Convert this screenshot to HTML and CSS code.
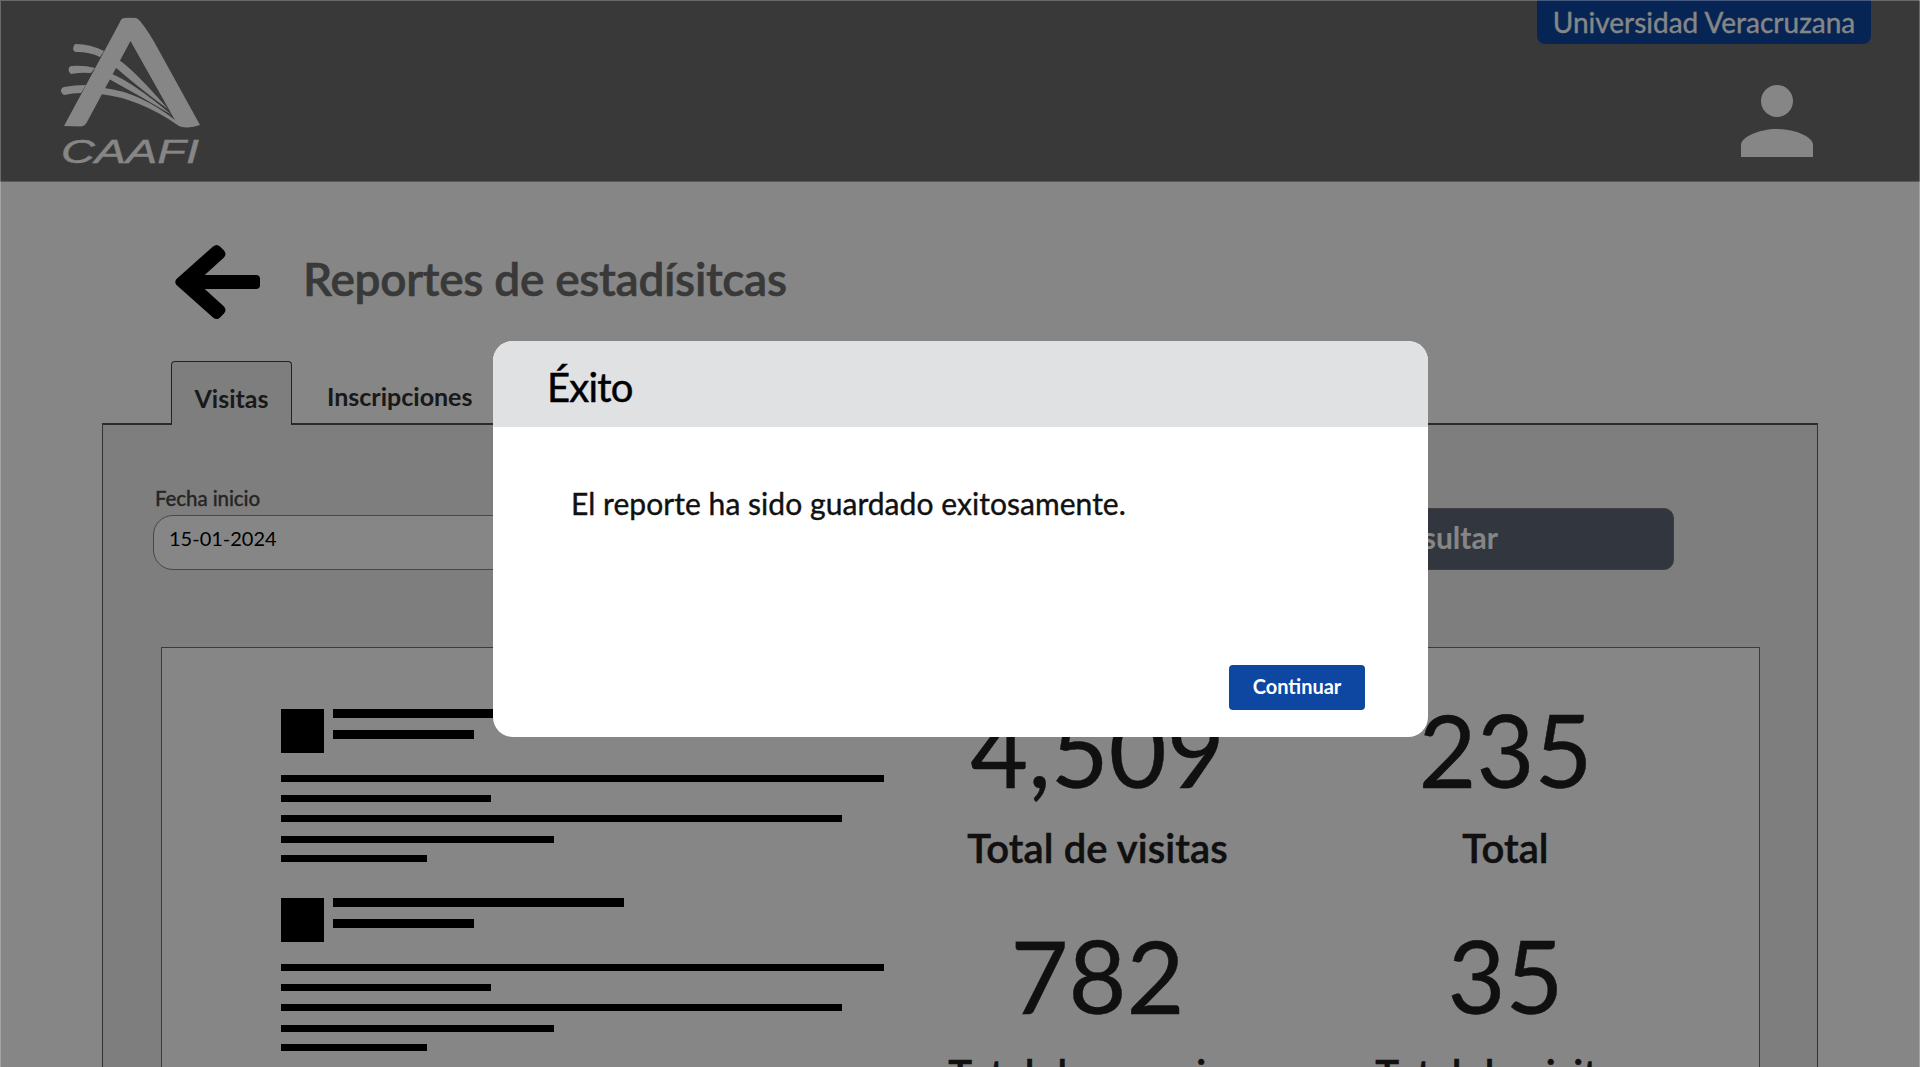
FILE: index.html
```html
<!DOCTYPE html>
<html lang="es">
<head>
<meta charset="utf-8">
<title>Reportes</title>
<link rel="stylesheet" href="styles.css">
</head>
<body>
<div class="page">
  <header class="topbar">
    <div class="logo">
      <svg class="logo-mark" width="142" height="116" viewBox="60 16 142 116" fill="currentColor">
        <path d="M64 126L120 22Q121 18.500 124 18Q130 17.500 136 18Q138 18.500 140 21Q149 32 157 47L200 125Q190 129 180 126.500Q178 126 176 122L130.500 41L87 122Q85 126 81 126.500Q72 126 64 126Z"/>
        <path d="M76 44Q90 44 104 51L100 57Q90 52 76 52Q72 51 73.500 47Q74 44 76 44ZM71 66Q84 65 95 68L91 73Q82 72 71 74Q67 71 69.500 67ZM64 87Q75 85 86 85L81 93Q73 93 64 95Q59 92 62 88Z"/>
        <path d="M119 60Q134 70 168 109Q144 92 115 67ZM112 74Q132 82 172 115Q142 97 109 79ZM104 88Q140 92 177 121.500L179 126Q139 98 100 94Z"/>
      </svg>
      <svg class="logo-name" width="142" height="34"><text x="1" y="26" textLength="138" lengthAdjust="spacingAndGlyphs">CAAFI</text></svg>
    </div>
    <div class="account">
      <div class="badge">Universidad Veracruzana</div>
      <svg class="user" width="72" height="72" viewBox="0 0 72 72" fill="currentColor"><circle cx="36" cy="16" r="16"/><path d="M0 72V60C0 52 18 44 36 44S72 52 72 60V72Z"/></svg>
    </div>
  </header>
  <main class="content">
    <div class="heading">
      <svg width="86" height="76" viewBox="0 0 86 76" fill="#000"><rect x="20" y="31" width="66" height="14" rx="4"/><path d="M2.500 35L39 2.500Q43 -.500 46 2.500L50 6.500Q53 10 50 13.500L23 38L50 62.500Q53 66 50 69.500L46 73.500Q43 76.500 39 73.500L2.500 41Q0 38 2.500 35Z"/></svg>
      <h1>Reportes de estadísitcas</h1>
    </div>
    <nav class="tabs"><span class="tab active">Visitas</span><span class="tab">Inscripciones</span></nav>
    <section class="panel">
      <div class="filters">
        <div class="field"><label>Fecha inicio</label><div class="input">15-01-2024</div></div>
        <div class="query">Consultar</div>
      </div>
      <div class="report">
        <div class="lists">
          <div class="block">
            <div class="head"><i class="square"></i><div class="lines"><i class="w291"></i><i class="w141"></i></div></div>
            <i class="bar b1"></i><i class="bar b2"></i><i class="bar b3"></i><i class="bar b4"></i><i class="bar b5"></i>
          </div>
          <div class="block">
            <div class="head"><i class="square"></i><div class="lines"><i class="w291"></i><i class="w141"></i></div></div>
            <i class="bar b1"></i><i class="bar b2"></i><i class="bar b3"></i><i class="bar b4"></i><i class="bar b5"></i>
          </div>
        </div>
        <div class="stats">
          <div class="stat"><b>4,509</b><span>Total de visitas</span></div>
          <div class="stat"><b>235</b><span>Total</span></div>
          <div class="stat"><b>782</b><span>Total de usuarios</span></div>
          <div class="stat"><b>35</b><span>Total de visitas</span></div>
        </div>
      </div>
    </section>
  </main>
</div>
<div class="overlay">
  <div class="modal" role="dialog">
    <div class="modal-title">Éxito</div>
    <p>El reporte ha sido guardado exitosamente.</p>
    <button>Continuar</button>
  </div>
</div>
</body>
</html>
```
FILE: styles.css
```css
*{box-sizing:border-box}
body{margin:0;font-family:Lato,sans-serif;background:#fff;height:1067px;overflow:hidden}
.page{height:1067px;overflow:hidden}
.topbar{height:182px;background:#6d6d6d;border-bottom:1px solid #aaa;color:#fff;display:flex;justify-content:space-between;padding:0 49px 0 60px}
.logo{padding-top:16px;display:flex;flex-direction:column}
.logo-name{margin-top:5px;overflow:visible}
.logo-name text{font:italic 33px "Liberation Sans",sans-serif;fill:#fff;stroke:#fff;stroke-width:.4px}
.account{display:flex;flex-direction:column;align-items:flex-end;width:334px}
.badge{width:334px;height:44px;background:#0d47a1;border-radius:0 0 8px 8px;font-size:28px;line-height:44px;text-align:center;white-space:nowrap;-webkit-text-stroke:.3px}
.user{margin:41px 58px 0 0}
.content{padding:62px 102px 0}
.heading{display:flex;align-items:center;height:76px;padding-left:72px}
h1{margin:-6px 0 0 43px;font-size:46px;font-weight:600;line-height:60px;letter-spacing:-.3px;color:#6d6d6d;white-space:nowrap;-webkit-text-stroke:.6px}
.tabs{display:flex;height:62px;margin-top:41px;padding-left:69px;position:relative;z-index:1}
.tab{height:62px;padding:5px 36px 0 35px;font-size:25px;line-height:60px;font-weight:700;color:#303030}
.tab.active{width:121px;height:64px;padding:6px 0 0;text-align:center;border:1px solid #404048;border-bottom:0;border-radius:4px 4px 0 0;background:#f0f0f0}
.panel{height:700px;border:1px solid #606060;border-top:2px solid #505058;background:#f0f0f0;padding:59px 57px 0 50px}
.filters{display:flex;justify-content:space-between;padding-right:86px}
.field{width:420px}
.field label{display:block;font-size:20.5px;line-height:28px;font-weight:500;letter-spacing:-.1px;color:#484848;padding-left:2px;-webkit-text-stroke:.3px}
.input{margin-top:3px;height:55px;border:1px solid #888;border-radius:20px;background:#fff;padding-left:15px;font-size:20px;line-height:45px;color:#000}
.query{width:486px;height:62px;margin-top:24px;border:1px solid #777;border-radius:10px;background:#5f6778;color:#fff;font-size:30px;font-weight:700;line-height:57px;text-align:center;padding-left:5px}
.report{margin:77px 0 0 8px;height:520px;border:1px solid #707070;background:#fff;display:flex;padding:61px 0 0 119px}
.lists{width:604px}
.block{height:189px}
.head{display:flex;gap:9px;height:44px;margin-bottom:22px}
.square{width:43px;background:#000}
.lines i{display:block;height:9px;background:#000;margin-bottom:12px}
.w291{width:291px}
.w141{width:141px}
.bar{display:block;height:7px;background:#000;margin-bottom:13px}
.b1{width:603px}
.b2{width:210px}
.b3{width:561px;margin-bottom:14px}
.b4{width:273px;margin-bottom:12px}
.b5{width:146px}
.stats{display:grid;grid-template-columns:408px 408px;grid-template-rows:226px 226px;margin:-20px 0 0 8.5px}
.stat{display:flex;flex-direction:column;align-items:center;color:#202020;white-space:nowrap}
.stat b{font-size:100px;font-weight:400;line-height:120px;-webkit-text-stroke:.4px}
.stat span{font-size:40px;font-weight:600;line-height:48px;margin-top:15px;letter-spacing:.1px;-webkit-text-stroke:.5px}
.overlay{position:absolute;inset:0;z-index:2;background:rgba(0,0,0,.475);box-shadow:inset 1px 1px rgba(255,255,255,.25),inset -1px 0 rgba(255,255,255,.25);padding:341px 492px 0 493px}
.modal{height:396px;border-radius:20px;overflow:hidden;background:#fff;display:flex;flex-direction:column;color:#111}
.modal-title{height:86px;background:#e0e1e3;color:#000;font-size:40px;line-height:92px;padding-left:54px;letter-spacing:-.8px;-webkit-text-stroke:.5px}
.modal p{margin:56px 0 0 78px;font-size:30px;line-height:40px;letter-spacing:.05px;white-space:nowrap;-webkit-text-stroke:.4px}
.modal button{margin:142px 63px 0 auto;width:136px;height:45px;border:0;border-radius:4px;background:#0d47a1;color:#fff;font:700 20px Lato,sans-serif;padding:0 0 3px}
```
